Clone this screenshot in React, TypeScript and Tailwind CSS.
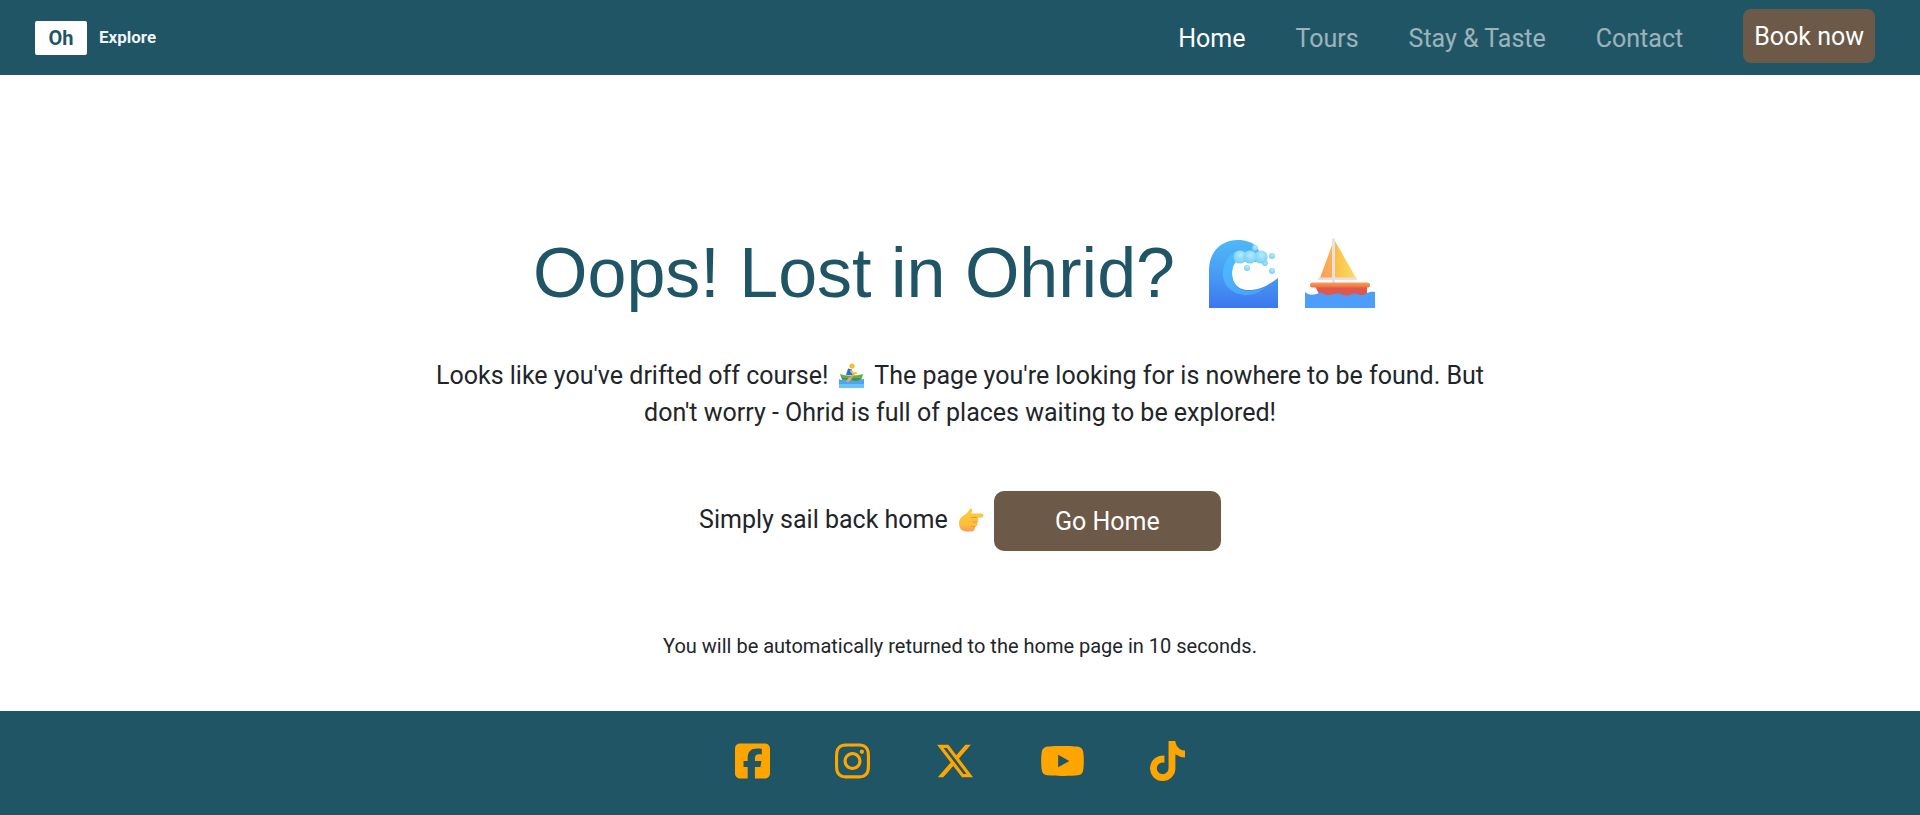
import { FaInstagram, FaSquareFacebook, FaTiktok, FaXTwitter, FaYoutube } from 'react-icons/fa6'

const links = [
  { label: 'Home', active: true },
  { label: 'Tours', active: false },
  { label: 'Stay & Taste', active: false },
  { label: 'Contact', active: false },
]

const socials = [
  { label: 'Facebook', Icon: FaSquareFacebook, size: 'h-10 w-[35px]' },
  { label: 'Instagram', Icon: FaInstagram, size: 'h-10 w-[35px]' },
  { label: 'X', Icon: FaXTwitter, size: 'h-10 w-10' },
  { label: 'YouTube', Icon: FaYoutube, size: 'h-10 w-[45px]' },
  { label: 'TikTok', Icon: FaTiktok, size: 'h-10 w-[35px]' },
]

function Wave() {
  return (
    <svg viewBox="0 0 70 70" className="size-[70px]" aria-hidden="true">
      <defs>
        <linearGradient id="waveBody" x1="0" y1="0" x2="0" y2="1">
          <stop offset="0" stopColor="#4db9f6" />
          <stop offset="0.45" stopColor="#4a9ff5" />
          <stop offset="1" stopColor="#3b78ee" />
        </linearGradient>
        <linearGradient id="waveCurl" x1="0" y1="0" x2="1" y2="1">
          <stop offset="0" stopColor="#4cc0ff" />
          <stop offset="1" stopColor="#4a9dfb" />
        </linearGradient>
        <radialGradient id="foam" cx="0.55" cy="0.35" r="0.65">
          <stop offset="0" stopColor="#b0ecff" />
          <stop offset="1" stopColor="#78ccf7" />
        </radialGradient>
      </defs>
      <path fill="url(#waveBody)" d="M0 70V32C0 14 12 2 29 2c8 0 14 2 19 7l4 8v6H26c-2 3-3 7-3 12 0 10 6 17 16 17 12 0 19-4 30-12v30z" />
      <path fill="url(#waveCurl)" d="M30 12C20 15 14 25 14 36c0 12 10 21 24 21 8 0 13-3 19-8-5 2-11 4-18 4-10 0-16-7-16-17 0-5 1-9 4-12h24v-8c-6-4-12-5-21-4z" />
      <g fill="url(#foam)">
        <circle cx="46" cy="10" r="3" />
        <circle cx="56" cy="25" r="3" />
        <circle cx="31" cy="19" r="6.600" />
        <circle cx="52" cy="19" r="6.600" />
        <circle cx="41" cy="19" r="6.600" />
        <circle cx="63" cy="18" r="3" />
        <circle cx="63" cy="33" r="3" />
        <circle cx="38" cy="30" r="3" />
      </g>
    </svg>
  )
}

function Sailboat() {
  return (
    <svg viewBox="0 0 70 70" className="size-[70px]" aria-hidden="true">
      <defs>
        <linearGradient id="sailLeft" x1="1" y1="0" x2="0" y2="1">
          <stop offset="0" stopColor="#fbb757" />
          <stop offset="1" stopColor="#fb9c54" />
        </linearGradient>
        <linearGradient id="sailRight" x1="0" y1="0" x2="1" y2="0">
          <stop offset="0" stopColor="#f9bf4b" />
          <stop offset="1" stopColor="#ffdd5a" />
        </linearGradient>
        <linearGradient id="deck" x1="0" y1="0" x2="0" y2="1">
          <stop offset="0" stopColor="#fc9e5c" />
          <stop offset="1" stopColor="#ea7240" />
        </linearGradient>
      </defs>
      <path fill="url(#sailLeft)" d="M27 7v33H15z" />
      <path fill="url(#sailRight)" d="M30 3l21 37H30z" />
      <path fill="#e9e0e7" d="M27 1q1.500-1.500 3 0v44h-3z" />
      <rect x="13" y="39.500" width="39" height="2.500" rx="1.200" fill="#eadde4" />
      <path fill="#df5849" d="M10 48h52v14H17z" />
      <rect x="5" y="44.500" width="60" height="5" rx="2.500" fill="url(#deck)" />
      <path fill="#4d9dfc" d="M0 54c5 4 9 3 14 1 4-1 6 3 11 2s7-3 11-1 7 2 11 0 7 2 11 1 5-4 12-3v16H0z" />
    </svg>
  )
}

function Rower() {
  return (
    <svg viewBox="0 0 26 26" className="inline-block size-[26px] align-[-5px]" aria-hidden="true">
      <path fill="#2a6fd6" d="M9 5.500l4 1 1 5.500H7z" />
      <path fill="none" stroke="#ffb92e" strokeWidth="2" strokeLinecap="round" d="M12 8l2 2.500 3-.5" />
      <circle cx="13" cy="3" r="2.600" fill="#ffb92e" />
      <path fill="#65ad45" d="M1 11q4 1.500 11 1.500T24 11q-1 6-4 8H5q-3-3-4-8z" />
      <path fill="#4b9137" d="M3 15h19l-2 4H5z" />
      <path fill="#4ba5f0" d="M0 16q3 2 6 0 3 3 7 1 4 2 7 0 3-1 5-1v9H0z" />
      <path fill="#6cc3fb" d="M0 21h25v4H0z" />
      <path fill="none" stroke="#dfaa7d" strokeWidth="1.500" strokeLinecap="round" d="M15 11l-4 5" />
      <path fill="#dfaa7d" d="M10 14l3 2-4 3.500-2-1z" />
    </svg>
  )
}

function PointingHand() {
  return (
    <svg viewBox="0 0 26 26" className="inline-block size-[26px] align-[-5px]" aria-hidden="true">
      <defs>
        <linearGradient id="skin" x1="0" y1="0" x2="0" y2="1">
          <stop offset="0" stopColor="#ffcb3c" />
          <stop offset="0.7" stopColor="#ffbd3b" />
          <stop offset="1" stopColor="#f59a5c" />
        </linearGradient>
      </defs>
      <path fill="url(#skin)" d="M12 2c2-1 3 1 2 3l-1 1.500h10.500c2.500 0 2.500 4 0 4H19c2 1 2 4 0 5 1 2 0 4-2 4 0 3-1 5-4 5H9c-5 0-8-3-8-8 0-6 4-7 8-10.500z" />
      <path fill="none" stroke="#ed933a" strokeWidth="1" strokeLinecap="round" d="M14 10.500h5M15 15h4M14 19.500h3" />
    </svg>
  )
}

export default function App() {
  return (
    <div className="flex min-h-screen flex-col bg-white font-[Roboto,sans-serif] text-[25px] leading-[37px] text-[#212529]">
      <header className="flex h-[75px] items-center justify-between bg-[#205566] pr-[45px] pl-[35px]">
        <a href="#" className="flex items-center gap-3 font-bold">
          <span className="flex h-[34px] w-[52px] items-center justify-center rounded-xs bg-white text-xl text-[#205566]">Oh</span>
          <span className="pb-0.5 text-[17px] leading-6 text-white/95">Explore</span>
        </a>
        <nav className="flex items-center gap-[50px]">
          {links.map((link) => (
            <a key={link.label} href="#" className={link.active ? 'pt-0.5 text-white' : 'pt-0.5 text-white/55'}>
              {link.label}
            </a>
          ))}
          <button type="button" className="mb-[3px] ml-[10px] h-[54px] rounded-lg bg-[#6d5948] px-[11px] text-white">
            Book now
          </button>
        </nav>
      </header>

      <main className="flex flex-1 flex-col items-center px-6 text-center">
        <h1 className="mt-[156px] flex items-center pr-3 font-['Liberation_Sans',sans-serif] text-[70px] leading-[84px] text-[#205566]">
          Oops! Lost in Ohrid?
          <span className="ml-[34px] flex gap-[26px]">
            <Wave />
            <Sailboat />
          </span>
        </h1>
        <p className="mt-[42px] max-w-[1100px]">
          Looks like you've drifted off course! <span className="px-1"><Rower /></span> The page you're looking for is nowhere to be found. But don't worry - Ohrid is full of places waiting to be explored!
        </p>
        <div className="mt-[60px] flex items-center">
          <p className="mb-1">
            Simply sail back home <span className="pr-2.5 pl-1"><PointingHand /></span>
          </p>
          <button type="button" className="h-[60px] w-[227px] rounded-[10px] bg-[#6d5948] text-white">
            Go Home
          </button>
        </div>
        <p className="mt-20 mb-[50px] text-xl leading-[30px]">You will be automatically returned to the home page in 10 seconds.</p>
      </main>

      <footer className="flex h-[104px] items-center justify-center gap-[65px] bg-[#205566] pb-1 text-[#ffa500]">
        {socials.map(({ label, Icon, size }) => (
          <a key={label} href="#" aria-label={label}>
            <Icon className={size} />
          </a>
        ))}
      </footer>
    </div>
  )
}
